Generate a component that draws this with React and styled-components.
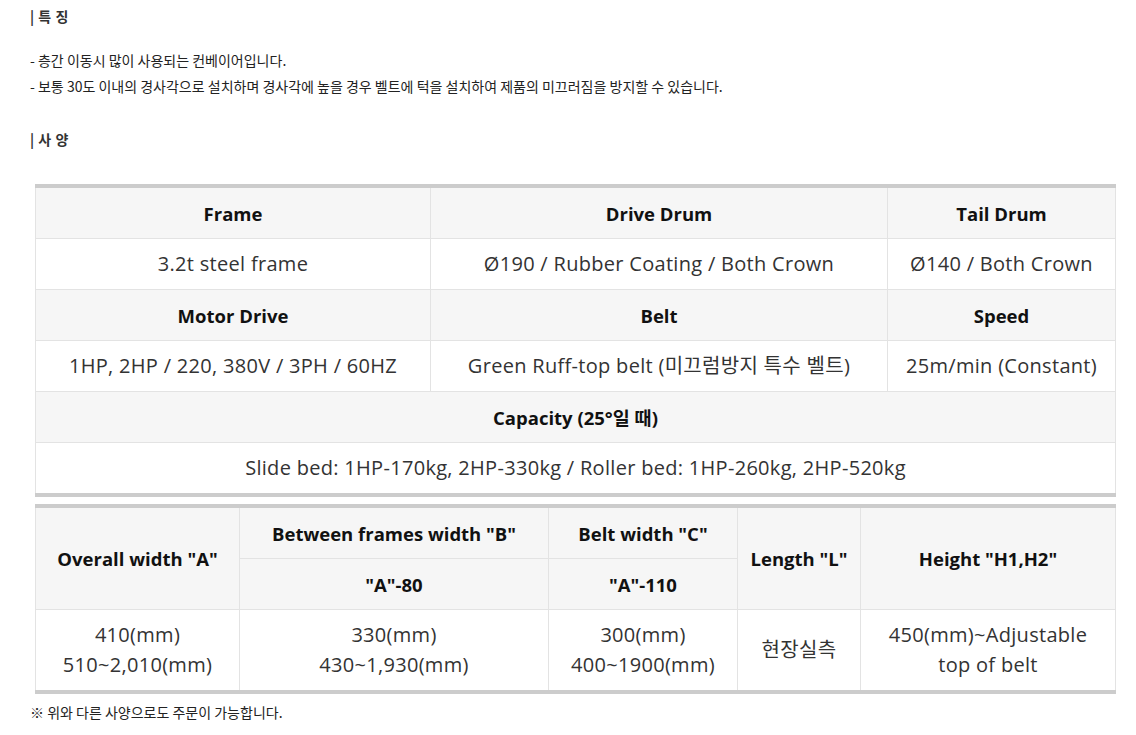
import React from 'react'
import styled, { createGlobalStyle } from 'styled-components'

const GlobalStyle = createGlobalStyle`
  body {
    margin: 0;
    background: #fff;
    font-family: "Noto Sans CJK KR", "Noto Sans", sans-serif;
    color: #222;
  }
`

const Page = styled.div`
  width: 1136px;
  padding: 5px 21px 0 30px;
  box-sizing: border-box;
`

const SectionTitle = styled.h3`
  margin: 0;
  font-size: 14px;
  font-weight: 700;
  color: #333;
  line-height: 22px;
  letter-spacing: 0.5px;
`

const Desc = styled.ul`
  list-style: none;
  margin: 20px 0 0;
  padding: 0;
`

const DescItem = styled.li`
  font-size: 14px;
  line-height: 26px;
  color: #222;
`

const SpecTitle = styled(SectionTitle)`
  margin-top: 29px;
`

const Table = styled.table`
  width: 1080px;
  margin-left: 5px;
  border-collapse: collapse;
  table-layout: fixed;
  border-top: 4px solid #ccc;
  border-bottom: 4px solid #ccc;
  font-family: "Open Sans", "Noto Sans CJK KR", sans-serif;
  margin-top: ${(p) => p.$top || 0}px;
`

const Th = styled.th`
  background: #f6f6f6;
  border: 1px solid #e3e3e3;
  font-size: 18.5px;
  font-weight: 700;
  color: #111;
  height: ${(p) => p.$h || 50}px;
  padding: 0 8px;
  text-align: center;
`

const Td = styled.td`
  background: #fff;
  border: 1px solid #e3e3e3;
  font-size: 20px;
  font-weight: 400;
  letter-spacing: 0.3px;
  color: #333;
  height: ${(p) => p.$h || 50}px;
  padding: 0 6px;
  text-align: center;
  line-height: 30px;
`

const Note = styled.p`
  margin: 8px 0 0;
  font-size: 14px;
  color: #222;
`

export default function App() {
  return (
    <Page>
      <GlobalStyle />
      <SectionTitle>| 특 징</SectionTitle>
      <Desc>
        <DescItem>- 층간 이동시 많이 사용되는 컨베이어입니다.</DescItem>
        <DescItem>- 보통 30도 이내의 경사각으로 설치하며 경사각에 높을 경우 벨트에 턱을 설치하여 제품의 미끄러짐을 방지할 수 있습니다.</DescItem>
      </Desc>
      <SpecTitle>| 사 양</SpecTitle>

      <Table $top={34}>
        <colgroup>
          <col style={{ width: 395 }} />
          <col style={{ width: 457 }} />
          <col style={{ width: 228 }} />
        </colgroup>
        <tbody>
          <tr>
            <Th>Frame</Th>
            <Th>Drive Drum</Th>
            <Th>Tail Drum</Th>
          </tr>
          <tr>
            <Td>3.2t steel frame</Td>
            <Td>Ø190 / Rubber Coating / Both Crown</Td>
            <Td>Ø140 / Both Crown</Td>
          </tr>
          <tr>
            <Th>Motor Drive</Th>
            <Th>Belt</Th>
            <Th>Speed</Th>
          </tr>
          <tr>
            <Td>1HP, 2HP / 220, 380V / 3PH / 60HZ</Td>
            <Td>Green Ruff-top belt (미끄럼방지 특수 벨트)</Td>
            <Td>25m/min (Constant)</Td>
          </tr>
          <tr>
            <Th colSpan={3}>Capacity (25°일 때)</Th>
          </tr>
          <tr>
            <Td colSpan={3}>Slide bed: 1HP-170kg, 2HP-330kg / Roller bed: 1HP-260kg, 2HP-520kg</Td>
          </tr>
        </tbody>
      </Table>

      <Table $top={7}>
        <colgroup>
          <col style={{ width: 204 }} />
          <col style={{ width: 309 }} />
          <col style={{ width: 189 }} />
          <col style={{ width: 123 }} />
          <col style={{ width: 255 }} />
        </colgroup>
        <tbody>
          <tr>
            <Th rowSpan={2}>Overall width "A"</Th>
            <Th>Between frames width "B"</Th>
            <Th>Belt width "C"</Th>
            <Th rowSpan={2}>Length "L"</Th>
            <Th rowSpan={2}>Height "H1,H2"</Th>
          </tr>
          <tr>
            <Th>"A"-80</Th>
            <Th>"A"-110</Th>
          </tr>
          <tr>
            <Td $h={80}>410(mm)<br />510~2,010(mm)</Td>
            <Td $h={80}>330(mm)<br />430~1,930(mm)</Td>
            <Td $h={80}>300(mm)<br />400~1900(mm)</Td>
            <Td $h={80}>현장실측</Td>
            <Td $h={80}>450(mm)~Adjustable<br />top of belt</Td>
          </tr>
        </tbody>
      </Table>
      <Note>※ 위와 다른 사양으로도 주문이 가능합니다.</Note>
    </Page>
  )
}
